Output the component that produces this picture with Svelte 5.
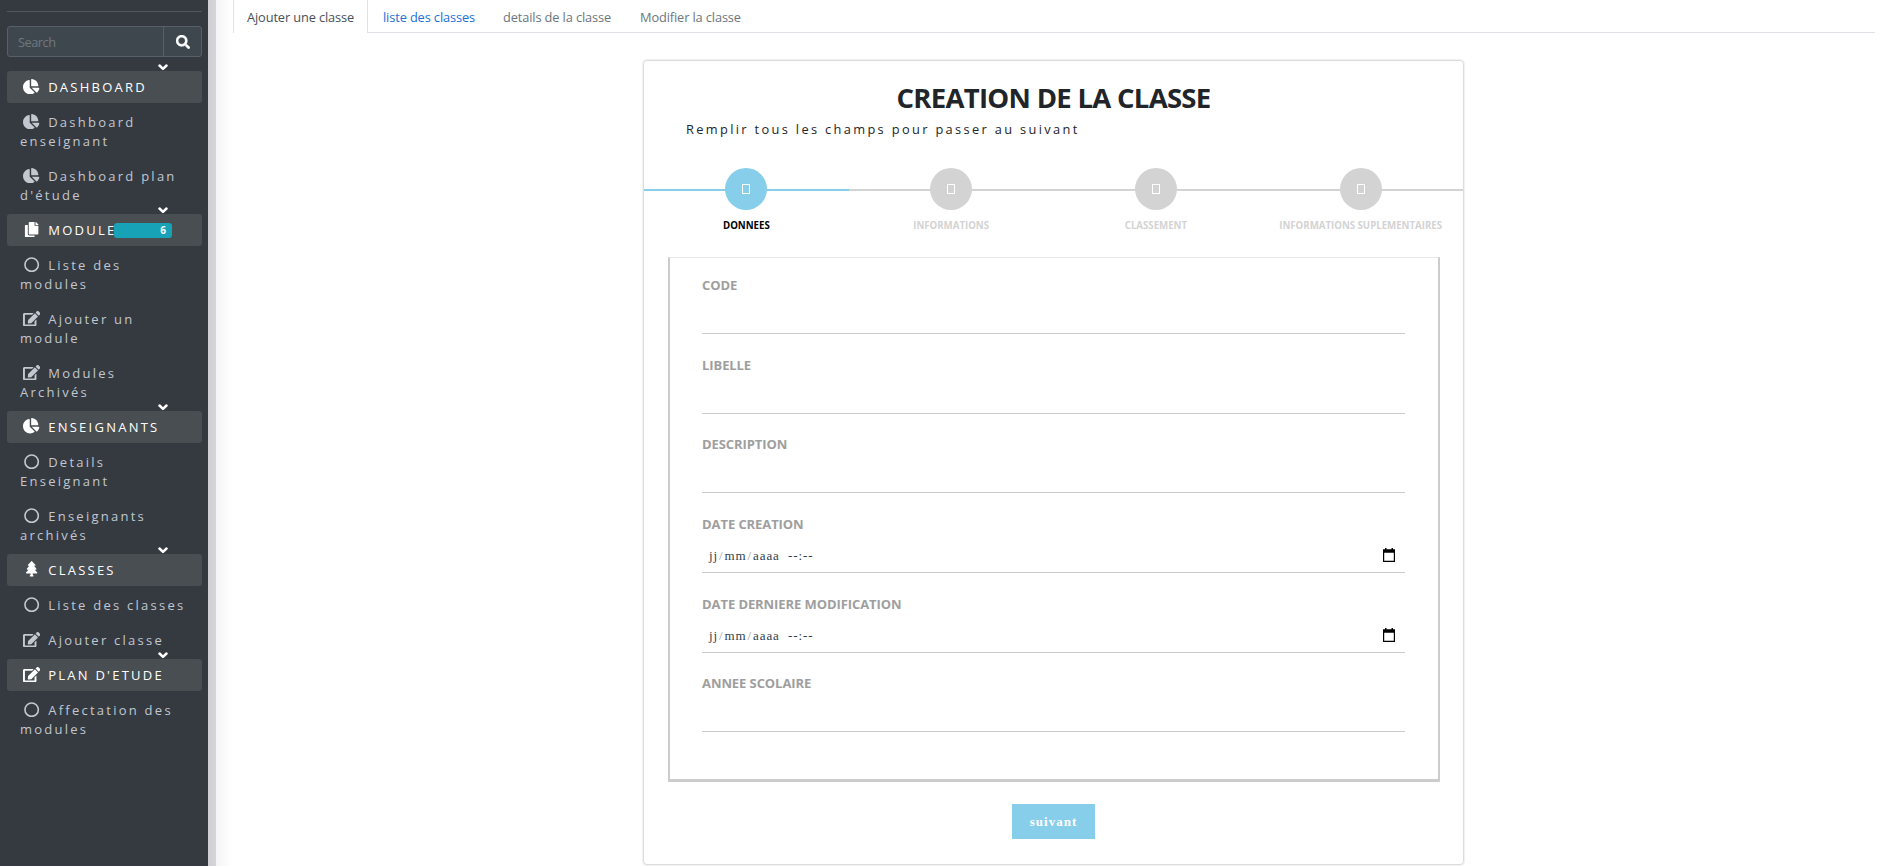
<script>
  const menu = [
    { header: true, icon: 'pie', text: 'DASHBOARD' },
    { icon: 'pie', text: 'Dashboard', rest: 'enseignant' },
    { icon: 'pie', text: 'Dashboard plan', rest: "d'étude" },
    { header: true, icon: 'copy', text: 'MODULE', badge: 6 },
    { icon: 'circle', text: 'Liste des', rest: 'modules' },
    { icon: 'edit', text: 'Ajouter un', rest: 'module' },
    { icon: 'edit', text: 'Modules', rest: 'Archivés' },
    { header: true, icon: 'pie', text: 'ENSEIGNANTS' },
    { icon: 'circle', text: 'Details', rest: 'Enseignant' },
    { icon: 'circle', text: 'Enseignants', rest: 'archivés' },
    { header: true, icon: 'tree', text: 'CLASSES' },
    { icon: 'circle', text: 'Liste des classes' },
    { icon: 'edit', text: 'Ajouter classe' },
    { header: true, icon: 'edit', text: "PLAN D'ETUDE" },
    { icon: 'circle', text: 'Affectation des', rest: 'modules' }
  ];
  const steps = ['DONNEES', 'INFORMATIONS', 'CLASSEMENT', 'INFORMATIONS SUPLEMENTAIRES'];
  const fields = [
    { label: 'CODE' },
    { label: 'LIBELLE' },
    { label: 'DESCRIPTION' },
    { label: 'DATE CREATION', date: true },
    { label: 'DATE DERNIERE MODIFICATION', date: true },
    { label: 'ANNEE SCOLAIRE' }
  ];
</script>

{#snippet glyph(name)}
  {#if name === 'pie'}
    <svg class="icon" width="17.3" height="15.4" viewBox="0 0 576 512"><path fill="currentColor" d="M527.79 288H290.500l158.030 158.030c6.040 6.040 15.980 6.530 22.190.680 38.700-36.460 65.320-85.610 73.130-140.860 1.340-9.460-6.510-17.850-16.060-17.850zm-15.830-64.800C503.720 103.740 408.260 8.280 288.800.040 279.680-.590 272 7.100 272 16.240V240h223.770c9.140 0 16.820-7.680 16.190-16.800zM224 288V50.710c0-9.550-8.390-17.400-17.840-16.060C86.990 51.490-4.100 155.600.140 280.370 4.500 408.510 114.830 513.590 243.030 511.980c50.400-.630 96.970-16.870 135.260-44.030 7.900-5.600 8.420-17.230 1.570-24.080L224 288z"/></svg>
  {:else if name === 'copy'}
    <svg class="icon" width="17.3" height="15.4" viewBox="-32 0 512 512"><path fill="currentColor" d="M320 448v40c0 13.255-10.745 24-24 24H24c-13.255 0-24-10.745-24-24V120c0-13.255 10.745-24 24-24h72v296c0 30.879 25.121 56 56 56h168zm0-344V0H152c-13.255 0-24 10.745-24 24v368c0 13.255 10.745 24 24 24h272c13.255 0 24-10.745 24-24V128H344c-13.200 0-24-10.800-24-24zm120.971-31.029L375.029 7.029A24 24 0 0 0 358.059 0H352v96h96v-6.059a24 24 0 0 0-7.029-16.970z"/></svg>
  {:else if name === 'edit'}
    <svg class="icon" width="17.3" height="15.4" viewBox="0 0 576 512"><path fill="currentColor" d="M402.600 83.200l90.200 90.200c3.800 3.800 3.800 10 0 13.800L274.400 405.600l-92.800 10.300c-12.400 1.400-22.900-9.100-21.500-21.500l10.300-92.800L388.800 83.200c3.800-3.800 10-3.800 13.800 0zm162-22.900l-48.800-48.800c-15.200-15.200-39.900-15.200-55.200 0l-35.400 35.400c-3.800 3.800-3.800 10 0 13.800l90.200 90.200c3.800 3.800 10 3.800 13.800 0l35.400-35.400c15.200-15.300 15.200-40 0-55.200zM384 346.200V448H64V128h229.800c3.200 0 6.200-1.300 8.500-3.500l40-40c7.600-7.600 2.200-20.500-8.500-20.500H48C21.500 64 0 85.500 0 112v352c0 26.500 21.500 48 48 48h352c26.500 0 48-21.500 48-48V306.200c0-10.700-12.900-16-20.500-8.500l-40 40c-2.200 2.300-3.500 5.300-3.500 8.500z"/></svg>
  {:else if name === 'tree'}
    <svg class="icon" width="17.3" height="15.4" viewBox="-64 0 512 512"><path fill="currentColor" d="M378.310 378.490L298.420 288h30.630c9.010 0 16.980-5 20.780-13.060 3.800-8.040 2.550-17.260-3.280-24.050L268.420 160h28.890c9.100 0 17.300-5.350 20.860-13.610 3.520-8.130 1.860-17.590-4.240-24.080L203.660 4.830c-6.030-6.450-17.280-6.450-23.320 0L70.060 122.310c-6.100 6.490-7.750 15.950-4.240 24.080C69.380 154.650 77.590 160 86.690 160h28.890l-78.140 90.910c-5.810 6.780-7.060 15.990-3.270 24.040C37.970 283 45.930 288 54.950 288h30.630L5.690 378.490c-6 6.790-7.360 16.090-3.560 24.260C5.860 410.860 14 416 22.930 416H160v24.450l-30.290 48.400c-5.320 10.640 2.420 23.160 14.310 23.160h95.960c11.890 0 19.630-12.520 14.310-23.160L224 440.450V416h137.070c8.930 0 17.070-5.140 20.800-13.250 3.800-8.170 2.440-17.470-3.560-24.260z"/></svg>
  {:else}
    <svg class="icon" width="17.3" height="15.4" viewBox="-32 0 576 512"><circle cx="256" cy="256" r="223" fill="none" stroke="currentColor" stroke-width="54"/></svg>
  {/if}
{/snippet}

<div class="page">
  <aside>
    <hr />
    <div class="search">
      <span class="query">Search</span>
      <span class="go"><svg width="14" height="14" viewBox="0 0 512 512"><path fill="#fff" stroke="#fff" stroke-width="14" d="M505 442.700L405.300 343c-4.500-4.500-10.600-7-17-7H372c27.600-35.300 44-79.700 44-128C416 93.100 322.900 0 208 0S0 93.100 0 208s93.100 208 208 208c48.300 0 92.700-16.400 128-44v16.300c0 6.400 2.500 12.500 7 17l99.700 99.700c9.400 9.400 24.600 9.400 33.900 0l28.300-28.300c9.400-9.400 9.400-24.600.1-34zM208 336c-70.700 0-128-57.200-128-128 0-70.700 57.200-128 128-128 70.700 0 128 57.200 128 128 0 70.700-57.200 128-128 128z"/></svg></span>
    </div>
    <nav>
      {#each menu as item}
        <a class="item" class:header={item.header}>
          {@render glyph(item.icon)}<span>{item.text}</span>
          {#if item.rest}<br />{item.rest}{/if}
          {#if item.badge}<b class="badge">{item.badge}</b>{/if}
          {#if item.header}
            <svg class="chevron" width="10" height="7" viewBox="0 0 10 7"><path d="M1.500 1.500 5 4.900 8.500 1.500" fill="none" stroke="#fff" stroke-width="2.500" stroke-linecap="round" stroke-linejoin="round"/></svg>
          {/if}
        </a>
      {/each}
    </nav>
  </aside>
  <div class="gutter"></div>
  <main>
    <div class="tabs">
      <span class="tab active">Ajouter une classe</span>
      <span class="tab link">liste des classes</span>
      <span class="tab details">details de la classe</span>
      <span class="tab edit">Modifier la classe</span>
    </div>
    <section class="card">
      <h2>CREATION DE LA CLASSE</h2>
      <p>Remplir tous les champs pour passer au suivant</p>
      <ol class="steps">
        {#each steps as step, i}
          <li class:current={i === 0}>
            <div class="dot"><i></i></div>
            <strong>{step}</strong>
          </li>
        {/each}
      </ol>
      <div class="fieldset">
        {#each fields as field}
          <div class="field">
            <label>{field.label}</label>
            {#if field.date}
              <div class="date">
                <span>jj<em>/</em>mm<em>/</em>aaaa&nbsp; --:--</span>
                <svg width="12" height="14" viewBox="0 0 12 14"><path d="M2 0h1.500v1.300h5V0H10v1.300h2V14H0V1.300h2zM1.200 4.700v8h9.600v-8z" fill="#000" fill-rule="evenodd"/></svg>
              </div>
            {/if}
          </div>
        {/each}
      </div>
      <button>suivant</button>
    </section>
  </main>
</div>

<style>
  :global(body) { margin: 0; background: #fff; overflow: hidden; }
  .page {
    display: flex;
    height: 866px;
    overflow: hidden;
    font-family: "Open Sans", "Noto Sans", sans-serif;
    color: #212529;
  }
  aside {
    box-sizing: border-box;
    flex: none;
    width: 208px;
    padding: 11px 6px 0 7px;
    background: #343a40;
  }
  hr { height: 1px; margin: 0 0 14px; border: 0; background: #4f5962; }
  .search {
    box-sizing: border-box;
    display: flex;
    height: 31px;
    border: 1px solid #56606a;
    border-radius: 3px;
    background: #3f474e;
  }
  .query {
    flex: 1;
    padding-left: 10px;
    font-size: 12.8px;
    line-height: 31px;
    letter-spacing: -.5px;
    color: #6f777f;
  }
  .go {
    display: flex;
    align-items: center;
    justify-content: center;
    width: 37px;
    border-left: 1px solid #56606a;
  }
  nav { display: flex; flex-direction: column; gap: 2.8px; margin-top: 14px; }
  .item {
    position: relative;
    padding: 6.9px 0 6.4px 13px;
    border-radius: 3px;
    font-size: 13px;
    line-height: 18.95px;
    letter-spacing: 2.250px;
    white-space: nowrap;
    color: #c2c7d0;
  }
  .header { background: #494e53; color: #fff; }
  .icon { margin: 0 7.900px 0 3px; vertical-align: -2px; }
  .chevron { position: absolute; left: 151px; top: -7px; }
  .badge {
    position: absolute;
    left: 107px;
    top: 9px;
    box-sizing: border-box;
    width: 58px;
    height: 15px;
    padding-right: 4px;
    border-radius: 3px;
    background: #17a2b8;
    font-size: 10px;
    line-height: 15px;
    letter-spacing: 2px;
    text-align: right;
  }
  .gutter {
    flex: none;
    width: 25px;
    background: linear-gradient(90deg, #d0cfd4 0, #d5d4d8 8px, #f4f4f4 8px, #fff 24px);
  }
  main { flex: 1; padding-right: 13px; }
  .tabs {
    box-sizing: border-box;
    display: flex;
    height: 33px;
    border-bottom: 1px solid #dee2e6;
    font-size: 12.800px;
    line-height: 34px;
    letter-spacing: -.12px;
    color: #6c757d;
  }
  .tab { box-sizing: border-box; flex: none; white-space: nowrap; }
  .active {
    width: 135px;
    height: 33px;
    padding-left: 13px;
    border: solid #dee2e6;
    border-width: 0 1px;
    background: #fff;
    color: #495057;
  }
  .link { width: 120px; padding-left: 15px; color: #2070d8; }
  .details { width: 137px; padding-left: 15px; }
  .edit { padding-left: 15px; }
  .card {
    box-sizing: border-box;
    display: flex;
    flex-direction: column;
    width: 821px;
    height: 805px;
    margin: 27px 0 0 410px;
    border: 1px solid #dcdcdc;
    border-radius: 4px;
    box-shadow: 0 0 2px #ccc;
  }
  h2 {
    margin: 19px 0 0;
    font-size: 27.500px;
    font-weight: 700;
    line-height: 36px;
    letter-spacing: -.7px;
    text-align: center;
  }
  p {
    margin: 2px 0 0 42px;
    font-size: 12.800px;
    line-height: 22px;
    letter-spacing: 2.350px;
    white-space: nowrap;
  }
  .steps {
    display: grid;
    grid-template-columns: repeat(4, 1fr);
    height: 89px;
    margin: 28px 0 0;
    padding: 0;
    list-style: none;
    color: lightgrey;
  }
  .steps li {
    display: flex;
    flex-direction: column;
    align-items: center;
    height: 50px;
    background: linear-gradient(currentColor, currentColor) 0 21px / 100% 2px no-repeat;
  }
  .dot {
    display: flex;
    flex: none;
    align-items: center;
    justify-content: center;
    width: 42px;
    height: 42px;
    border-radius: 50%;
    background: currentColor;
  }
  .dot i { width: 6px; height: 8px; margin-bottom: 1px; border: 1px solid #fff; }
  .steps .current { color: skyblue; }
  .current strong { color: #000; }
  .steps strong {
    margin-top: 9px;
    font-size: 9.700px;
    line-height: 14px;
    letter-spacing: -.02px;
    white-space: nowrap;
  }
  .fieldset {
    box-sizing: border-box;
    width: 772px;
    height: 525px;
    margin-left: 24px;
    padding: 17px 33px 0 32px;
    border: solid #ccc;
    border-width: 1px 2px 3px;
    border-top-color: #e8e8e8;
  }
  .field {
    box-sizing: border-box;
    height: 59px;
    margin-bottom: 20.700px;
    border-bottom: 1px solid #ccc;
  }
  label {
    display: block;
    font-size: 13px;
    font-weight: 700;
    line-height: 20px;
    letter-spacing: -.08px;
    color: #9e9e9e;
  }
  .date {
    display: flex;
    align-items: center;
    justify-content: space-between;
    height: 22px;
    padding: 11px 10px 0 7px;
    font: 13px/22px "Liberation Serif", serif;
    letter-spacing: .9px;
    color: #2c3e50;
  }
  .date svg { margin-bottom: 2px; }
  em { font-style: normal; color: #999; padding: 0 1px; }
  button {
    flex: none;
    width: 83px;
    height: 35px;
    margin: 22px 0 0 368px;
    padding: 0;
    border: 0;
    background: skyblue;
    color: #fff;
    font: 700 13px "Liberation Serif", serif;
    letter-spacing: 1px;
  }
</style>
